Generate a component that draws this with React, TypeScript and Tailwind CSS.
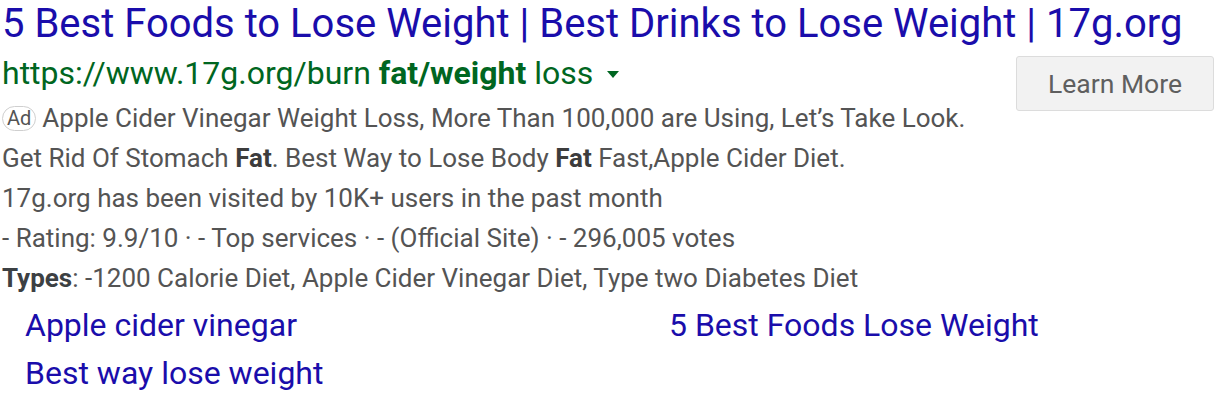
import React from 'react';

const App: React.FC = () => {
    return (
        <div className="w-[1216px] h-[402px] bg-white font-['Roboto',sans-serif] overflow-hidden">
            <div className="pl-[2px]">
                <a href="#" className="block text-[40px] leading-[48px] text-[#1a0dab] whitespace-nowrap">
                    5 Best Foods to Lose Weight | Best Drinks to Lose Weight | 17g.org
                </a>

                <div className="flex items-start justify-between">
                    <div>
                        <div className="flex items-center text-[32px] leading-[50px] text-[#006621] whitespace-nowrap">
                            <span>
                                https://www.17g.org/burn <b className="font-bold">fat/weight</b> loss
                            </span>
                            <svg width="14" height="8" viewBox="0 0 14 8" className="ml-[13px] mt-[4px]">
                                <path d="M1 0h12L7 7z" fill="#006621" />
                            </svg>
                        </div>

                        <div className="text-[26px] leading-[40px] text-[#545454] whitespace-nowrap">
                            <div className="flex items-center">
                                <span className="inline-flex items-center justify-center h-[25px] px-[4px] mr-[6px] border border-[#cfcfcf] rounded-[13px] text-[20px] leading-none text-[#545454]">
                                    Ad
                                </span>
                                <span>Apple Cider Vinegar Weight Loss, More Than 100,000 are Using, Let’s Take Look.</span>
                            </div>
                            <div>
                                Get Rid Of Stomach <b className="font-bold text-[#3c3c3c]">Fat</b>. Best Way to Lose Body <b className="font-bold text-[#3c3c3c]">Fat</b> Fast,Apple Cider Diet.
                            </div>
                            <div>17g.org has been visited by 10K+ users in the past month</div>
                            <div>- Rating: 9.9/10 · - Top services · - (Official Site) · - 296,005 votes</div>
                            <div>
                                <b className="font-bold text-[#3c4043]">Types</b>: -1200 Calorie Diet, Apple Cider Vinegar Diet, Type two Diabetes Diet
                            </div>
                        </div>
                    </div>

                    <button className="mt-[8px] mr-[2px] w-[198px] h-[55px] bg-[#f2f2f2] border border-[#dcdcdc] rounded-[3px] text-[26.5px] text-[#5f5f5f]">
                        Learn More
                    </button>
                </div>

                <div className="grid grid-cols-[644px_1fr] pl-[23px] mt-[3px] text-[32px] leading-[48px] text-[#1a0dab] whitespace-nowrap">
                    <a href="#">Apple cider vinegar</a>
                    <a href="#">5 Best Foods Lose Weight</a>
                    <a href="#">Best way lose weight</a>
                </div>
            </div>
        </div>
    );
};

export default App;
